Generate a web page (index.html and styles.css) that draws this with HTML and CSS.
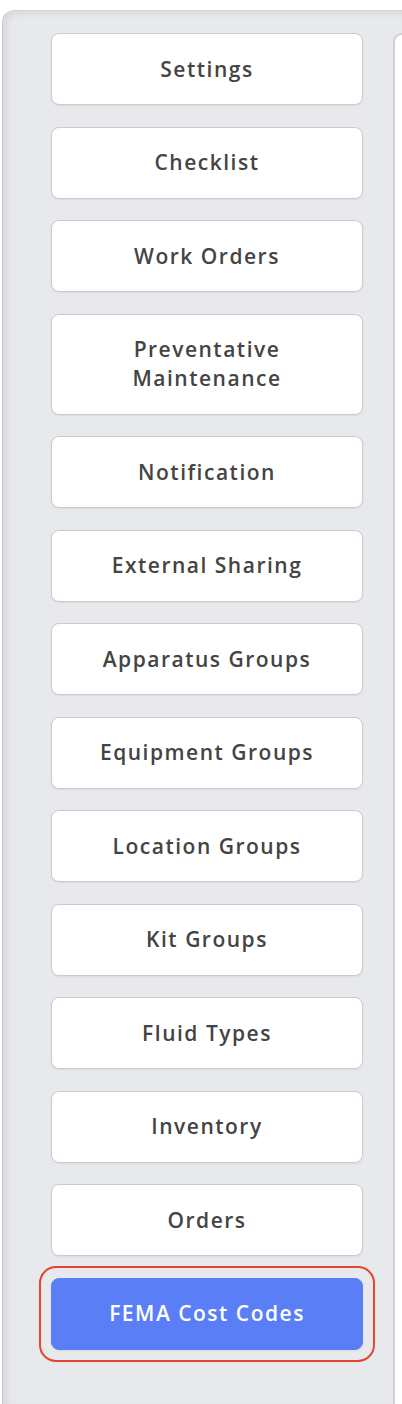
FILE: index.html
```html
<!DOCTYPE html>
<html>
<head>
<meta charset="utf-8">
<link rel="stylesheet" href="styles.css">
</head>
<body>
<div class="page">
  <div class="panel">
    <nav class="menu">
      <button class="item">Settings</button>
      <button class="item">Checklist</button>
      <button class="item">Work Orders</button>
      <button class="item">Preventative<br>Maintenance</button>
      <button class="item">Notification</button>
      <button class="item">External Sharing</button>
      <button class="item">Apparatus Groups</button>
      <button class="item">Equipment Groups</button>
      <button class="item">Location Groups</button>
      <button class="item">Kit Groups</button>
      <button class="item">Fluid Types</button>
      <button class="item">Inventory</button>
      <button class="item">Orders</button>
      <button class="item active">FEMA Cost Codes</button>
    </nav>
    <div class="content"></div>
  </div>
</div>
</body>
</html>
```
FILE: styles.css
```css
html, body {
  margin: 0;
  padding: 0;
  background: #ffffff;
}
.page {
  padding: 10px 0 0 2px;
  height: 1394px;
  overflow: hidden;
}
.panel {
  display: flex;
  gap: 30px;
  height: 100%;
  box-sizing: border-box;
  background: #e8e9ed;
  border-top: 1px solid #d3d4d8;
  border-left: 1px solid #c9cacd;
  border-top-left-radius: 12px;
  box-shadow: inset 4px 3px 6px rgba(0, 0, 0, 0.07);
  padding: 22px 0 0 48px;
}
.menu {
  display: flex;
  flex-direction: column;
  gap: 21.5px;
  width: 312px;
  flex: none;
}
.item {
  box-sizing: border-box;
  width: 312px;
  padding: 20.5px 0;
  border: 1px solid #cbcbcd;
  border-radius: 8px;
  background: #ffffff;
  box-shadow: 0 1px 2px rgba(0, 0, 0, 0.06);
  font-family: "Open Sans", sans-serif;
  font-weight: 600;
  font-size: 21px;
  line-height: 29px;
  letter-spacing: 1.5px;
  color: #444444;
  text-align: center;
  position: relative;
}
.item.active {
  background: #5a7ef6;
  border-color: #5a7ef6;
  color: #ffffff;
}
.item.active::after {
  content: "";
  position: absolute;
  inset: -13px;
  border: 2.5px solid #e5442e;
  border-radius: 17px;
}
.content {
  flex: 1;
  background: #ffffff;
  border: 2px solid #cfd0d3;
  border-right: none;
  border-bottom: none;
  border-top-left-radius: 10px;
}
```
